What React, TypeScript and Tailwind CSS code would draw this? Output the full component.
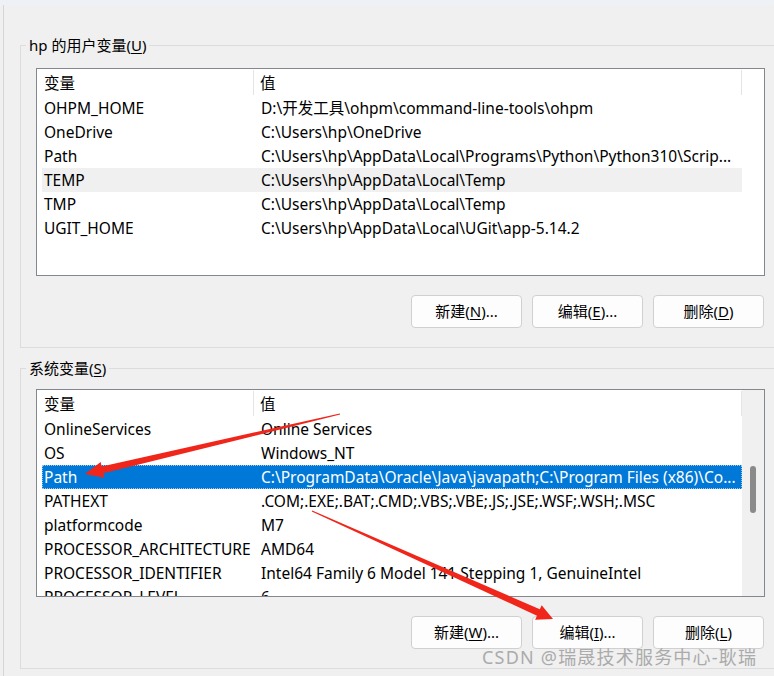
import React from "react";

type Row = { name: string; value: string; state?: "hover" | "selected" };

const userRows: Row[] = [
  { name: "OHPM_HOME", value: "D:\\开发工具\\ohpm\\command-line-tools\\ohpm" },
  { name: "OneDrive", value: "C:\\Users\\hp\\OneDrive" },
  { name: "Path", value: "C:\\Users\\hp\\AppData\\Local\\Programs\\Python\\Python310\\Scrip..." },
  { name: "TEMP", value: "C:\\Users\\hp\\AppData\\Local\\Temp", state: "hover" },
  { name: "TMP", value: "C:\\Users\\hp\\AppData\\Local\\Temp" },
  { name: "UGIT_HOME", value: "C:\\Users\\hp\\AppData\\Local\\UGit\\app-5.14.2" },
];

const sysRows: Row[] = [
  { name: "OnlineServices", value: "Online Services" },
  { name: "OS", value: "Windows_NT" },
  { name: "Path", value: "C:\\ProgramData\\Oracle\\Java\\javapath;C:\\Program Files (x86)\\Co...", state: "selected" },
  { name: "PATHEXT", value: ".COM;.EXE;.BAT;.CMD;.VBS;.VBE;.JS;.JSE;.WSF;.WSH;.MSC" },
  { name: "platformcode", value: "M7" },
  { name: "PROCESSOR_ARCHITECTURE", value: "AMD64" },
  { name: "PROCESSOR_IDENTIFIER", value: "Intel64 Family 6 Model 141 Stepping 1, GenuineIntel" },
  { name: "PROCESSOR_LEVEL", value: "6" },
];

function ListBox({ rows, scrollbar }: { rows: Row[]; scrollbar?: boolean }) {
  return (
    <div className="flex h-[208px] w-[729px] overflow-hidden border border-[#828790] bg-white text-[15.5px]">
      <div className="flex w-[705px] shrink-0 flex-col">
        <div className="flex h-[27px] shrink-0 items-start pt-[1px]">
          <div className="flex h-[25px] w-[217px] shrink-0 items-center border-r border-[#e5e5e5] pl-[7px] pt-[3px]">变量</div>
          <div className="flex h-[25px] flex-1 items-center border-r border-[#e5e5e5] pl-[6px] pt-[3px]">值</div>
        </div>
        {rows.map((r) => (
          <div
            key={r.name}
            className={
              "ml-[5px] flex h-[24px] w-[700px] shrink-0 items-center whitespace-nowrap pt-[2px] " +
              (r.state === "selected"
                ? "bg-[#0078d7] text-white outline-1 -outline-offset-1 outline-dotted outline-[#9cc8ee]"
                : r.state === "hover"
                ? "bg-[#f0f0f0]"
                : "")
            }
          >
            <span className="w-[219px] shrink-0 overflow-hidden pl-[2px]">{r.name}</span>
            <span className="flex-1 overflow-hidden">{r.value}</span>
          </div>
        ))}
      </div>
      {scrollbar ? (
        <div className="w-[22px] shrink-0 bg-[#f0f0f0] pl-[8px] pt-[76px]">
          <div className="h-[47px] w-[6px] rounded-[3px] bg-[#8a8a8a]" />
        </div>
      ) : (
        <div className="w-[22px] shrink-0" />
      )}
    </div>
  );
}

function Btn({ label, key1, rest }: { label: string; key1: string; rest: string }) {
  return (
    <button className="flex h-[33px] w-[111px] items-center justify-center rounded-[4px] border border-[#d0d0d0] bg-[#fdfdfd] text-[15px] text-black">
      {label}(<span className="underline underline-offset-2">{key1}</span>){rest}
    </button>
  );
}

function Group({
  title,
  mn,
  rows,
  scrollbar,
  buttons,
  top,
  pt,
}: {
  title: string;
  mn: string;
  rows: Row[];
  scrollbar?: boolean;
  buttons: [string, string, string][];
  top: string;
  pt: string;
}) {
  return (
    <fieldset className={"-mr-[10px] border border-r-0 border-[#dcdcdc] pb-[19px] pl-[15px] " + top + " " + pt}>
      <legend className="-ml-[10px] px-[3px] text-[15px] leading-[20px]">
        {title}(<span className="underline underline-offset-2">{mn}</span>)
      </legend>
      <ListBox rows={rows} scrollbar={scrollbar} />
      <div className="mt-[19px] flex w-[729px] justify-end gap-[10px] pr-[1px]">
        {buttons.map(([l, k, r]) => (
          <Btn key={l} label={l} key1={k} rest={r} />
        ))}
      </div>
    </fieldset>
  );
}

export default function App() {
  return (
    <div className="relative h-[676px] w-[774px] overflow-hidden bg-[#f0f0f0] font-['Noto_Sans','Noto_Sans_CJK_SC',sans-serif] text-[15px] text-black">
      <div className="flex h-full flex-col">
        <div className="h-[5px] shrink-0 bg-[#eef2f7]" />
        <div className="ml-[3px] flex flex-1 flex-col border-l border-[#d6d6d6] pl-[16px]">
          <Group
            title="hp 的用户变量"
            mn="U"
            rows={userRows}
            buttons={[
              ["新建", "N", "..."],
              ["编辑", "E", "..."],
              ["删除", "D", ""],
            ]}
            top="mt-[30px]"
            pt="pt-[13px]"
          />
          <Group
            title="系统变量"
            mn="S"
            rows={sysRows}
            scrollbar
            buttons={[
              ["新建", "W", "..."],
              ["编辑", "I", "..."],
              ["删除", "L", ""],
            ]}
            top="mt-[10px]"
            pt="pt-[11px]"
          />
        </div>
      </div>

      <svg className="pointer-events-none absolute left-0 top-0" width="774" height="676" viewBox="0 0 774 676">
        <polygon
          fill="#f0261b"
          points="340.14,414.58 103.3,473.3 104.33,477.68 85,474 100.67,462.12 101.7,466.5 339.86,413.42"
        />
        <polygon
          fill="#f0261b"
          points="311.75,511.55 536.97,615.65 535.13,619.76 553,619 541.67,605.16 539.83,609.27 312.25,510.45"
        />
      </svg>

      <div className="pointer-events-none absolute left-[482px] top-[646px] whitespace-nowrap text-[18px] leading-[22px] tracking-[1.2px] text-[#9a9a9a] opacity-80">
        CSDN @瑞晟技术服务中心-耿瑞
      </div>
    </div>
  );
}
